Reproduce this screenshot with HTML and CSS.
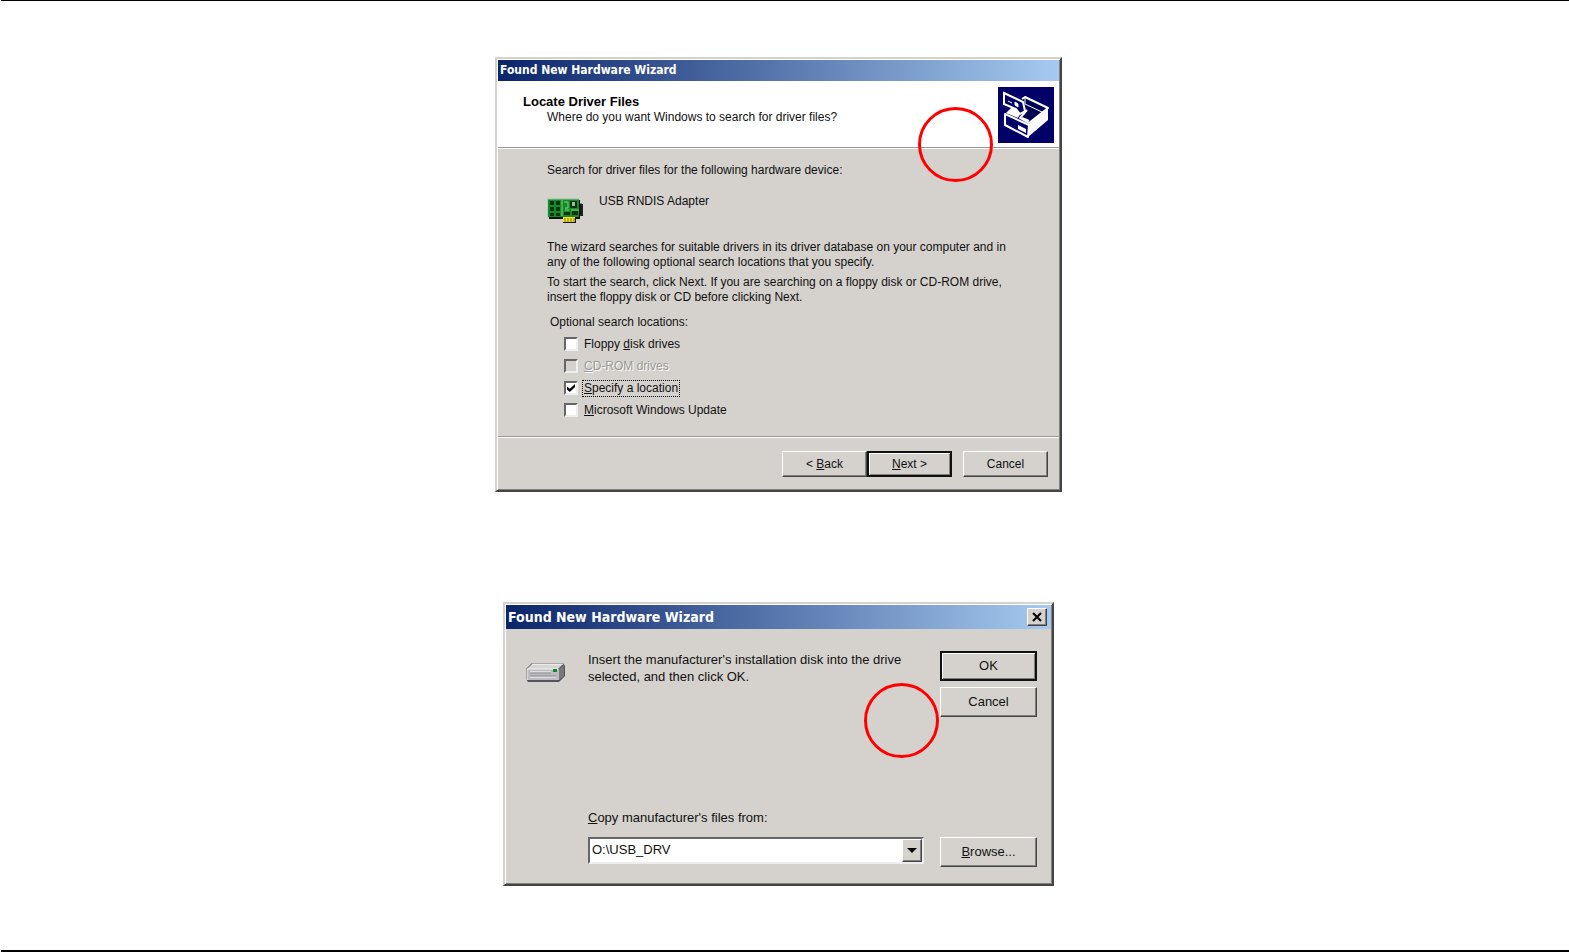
FILE: index.html
```
<!DOCTYPE html>
<html lang="en">
<head>
    <meta charset="UTF-8">
    <title>Found New Hardware Wizard</title>
    <link rel="stylesheet" href="styles.css">
</head>
<body>
<main class="page">
    <section class="dialog wizard">
        <h2 class="titleBar">Found New Hardware Wizard</h2>
        <div class="banner">
            <div class="bannerText">
                <h3>Locate Driver Files</h3>
                <p>Where do you want Windows to search for driver files?</p>
            </div>
            <svg class="bannerIcon" viewBox="0 0 56 56" aria-hidden="true">
                <rect width="56" height="56" fill="#000066"/>
                <path d="M7 27L15 20L26 10L50 21V33L30 50L7 38Z" fill="#000066"/>
                <path d="M24 12L27 10L50 21L31 36L22 31L29 23" fill="#000052" stroke="#fff" stroke-width="2" stroke-linejoin="round"/>
                <path d="M27 10V17L44 25" fill="none" stroke="#fff"/>
                <path d="M31 37L50 21V33L30 50Z" fill="#fff"/>
                <path d="M24 31L31 34" stroke="#fff" stroke-width="2"/>
                <path d="M7 27L31 38L30 50L7 38Z" fill="#000066" stroke="#fff" stroke-width="2" stroke-linejoin="round"/>
                <path d="M8 26L14 20L23 25L20 31Z" fill="#fff"/>
                <path d="M6 6L25 15L27 24L22 27L18 22L6 17Z" fill="#000066" stroke="#fff" stroke-width="2"/>
                <path d="M10 14l4 2M17 15l3 2v3l-3-2z" fill="#fff" stroke="#fff"/>
                <path d="M20 38l8 4v4l-8-4z" fill="#fff"/>
            </svg>
        </div>
        <div class="wizardBody">
            <p>Search for driver files for the following hardware device:</p>
            <div class="device">
                <svg class="cardIcon" viewBox="0 0 36 26" aria-hidden="true">
                    <path d="M2 2H33V6H36V18H33V21H29V25H16V21H2Z" fill="#111"/>
                    <rect x="1" y="1" width="31" height="18" fill="#158a2d"/>
                    <path d="M0 0V20M1 1H32" stroke="#9fc7a0" fill="none"/>
                    <path d="M3 3h4v4H3zM9 3h4v4H9zM3 9h4v4H3zM9 9h4v4H9zM3 15h4v3H3zM9 15h4v3H9zM23 3h7v7h-7zM17 14h6v3h-6zM25 13h6v4h-6z" fill="#073611"/>
                    <path d="M15 2v16M17 4h4v6h-3M24 12h8M18 12h4" stroke="#75d86e" fill="none"/>
                    <rect x="25" y="4" width="3" height="4" fill="#a7b5a3"/>
                    <rect x="16" y="19" width="12" height="5" fill="#f3df2b"/>
                    <path d="M18 20v4M21 20v4M24 20v4M27 20v4" stroke="#8c7b10"/>
                    <path d="M33 6h2v11h-2" fill="none" stroke="#333"/>
                </svg>
                <span>USB RNDIS Adapter</span>
            </div>
            <p>The wizard searches for suitable drivers in its driver database on your computer and in<br>any of the following optional search locations that you specify.</p>
            <p class="hint">To start the search, click Next. If you are searching on a floppy disk or CD-ROM drive,<br>insert the floppy disk or CD before clicking Next.</p>
            <fieldset class="locations">
                <legend>Optional search locations:</legend>
                <label class="check"><input type="checkbox"><span>Floppy <u>d</u>isk drives</span></label>
                <label class="check disabled"><input type="checkbox" disabled><span><u>C</u>D-ROM drives</span></label>
                <label class="check focused"><input type="checkbox" checked><span><u>S</u>pecify a location</span></label>
                <label class="check"><input type="checkbox"><span><u>M</u>icrosoft Windows Update</span></label>
            </fieldset>
        </div>
        <div class="wizardButtons">
            <button type="button" class="btn">&lt; <u>B</u>ack</button>
            <button type="button" class="btn default"><u>N</u>ext &gt;</button>
            <button type="button" class="btn cancel">Cancel</button>
        </div>
        <span class="ring"></span>
    </section>

    <section class="dialog disk">
        <div class="titleBar">
            <h2>Found New Hardware Wizard</h2>
            <button type="button" class="close" aria-label="Close">
                <svg viewBox="0 0 12 10" aria-hidden="true"><path d="M2 1L10 9M10 1L2 9" stroke="#000" stroke-width="2"/></svg>
            </button>
        </div>
        <div class="diskBody">
            <svg class="driveIcon" viewBox="0 0 39 20" aria-hidden="true">
                <path d="M6 0H37L39 3V13L33 19H2L0 16V6Z" fill="#555"/>
                <path d="M6 1H37L32 6H1Z" fill="#d5d5d8"/>
                <path d="M6 1H37" stroke="#fff"/>
                <path d="M33 6L38 2V13L33 17Z" fill="#77777c"/>
                <rect x="1" y="6" width="32" height="11" fill="#bdbdc1"/>
                <path d="M1 17V6H32" fill="none" stroke="#f5f5f5"/>
                <path d="M4 9H25M4 14H30" stroke="#fff"/>
                <path d="M4 10H25M4 13H30" stroke="#85858a"/>
                <rect x="27" y="6" width="4" height="3" fill="#0c8a20"/>
            </svg>
            <p>Insert the manufacturer's installation disk into the drive<br>selected, and then click OK.</p>
            <div class="diskButtons">
                <button type="button" class="btn default">OK</button>
                <button type="button" class="btn">Cancel</button>
            </div>
        </div>
        <div class="source">
            <div class="field">
                <label for="source"><u>C</u>opy manufacturer's files from:</label>
                <div class="combo">
                    <select id="source">
                        <option>O:\USB_DRV</option>
                    </select>
                    <span class="arrow"></span>
                </div>
            </div>
            <button type="button" class="btn"><u>B</u>rowse...</button>
        </div>
        <span class="ring"></span>
    </section>
</main>
</body>
</html>
```
FILE: styles.css
```
* {
    box-sizing: border-box;
    margin: 0;
    padding: 0;
}

body {
    padding-left: 1px;
    background: #fff;
    color: #111;
    font-family: "Liberation Sans", Arial, sans-serif;
    font-size: 12px;
    line-height: 15px;
}

button, select {
    color: inherit;
    font: inherit;
}

u {
    text-underline-offset: 1px;
}

.page {
    display: flex;
    flex-direction: column;
    align-items: center;
    gap: 110px;
    min-height: 100vh;
    padding: 56px 13px 64px 0;
    border-top: 1px solid #000;
    border-bottom: 2px solid #000;
}

/* window frame */
.dialog {
    position: relative;
    width: 100%;
    padding: 1px;
    background: #d5d2cd;
    border: 2px solid;
    border-color: #d5d2cd #444 #444 #d5d2cd;
    box-shadow: inset 1px 1px #fff, inset -1px -1px #808080;
}

.titleBar {
    display: flex;
    align-items: center;
    justify-content: space-between;
    height: 21px;
    padding: 0 2px;
    background: linear-gradient(to right, #0a246a, #a6caf0);
    color: #fff;
    font-family: "DejaVu Sans Condensed", "DejaVu Sans", sans-serif;
    font-size: 12px;
    font-weight: bold;
}

.titleBar h2 {
    font-size: inherit;
}

.ring {
    position: absolute;
    width: 75px;
    height: 75px;
    border: 3px solid #f00;
    border-radius: 50%;
}

.btn {
    height: 26px;
    background: #d5d2cd;
    border: 1px solid;
    border-color: #fff #444 #444 #fff;
    box-shadow: inset -1px -1px #808080;
}

.btn.default {
    border: 2px solid #111;
    box-shadow: inset 1px 1px #fff, inset -1px -1px #808080;
}

/* driver search window */
.wizard {
    max-width: 567px;
}

.wizard .ring {
    top: 48px;
    right: 67px;
}

.banner {
    display: flex;
    justify-content: space-between;
    height: 67px;
    padding: 6px 5px 0 25px;
    background: #fff;
    border-bottom: 1px solid #999;
}

.bannerText {
    padding-top: 6px;
}

.bannerText h3 {
    font-size: 13px;
    line-height: 17px;
    color: #000;
}

.bannerText p {
    padding-left: 24px;
}

.bannerIcon {
    width: 56px;
    height: 56px;
}

.wizardBody {
    padding: 14px 50px 15px 49px;
    border-top: 1px solid #fff;
}

.device {
    display: flex;
    gap: 16px;
    margin: 16px 0;
}

.cardIcon {
    width: 36px;
    height: 26px;
    margin-top: 4px;
}

.hint {
    margin-top: 5px;
}

.locations {
    padding: 10px 0 0 3px;
    border: 0;
}

.locations legend {
    float: left;
    width: 100%;
    margin-bottom: 3px;
}

.check {
    display: flex;
    align-items: center;
    clear: both;
    gap: 4px;
    height: 22px;
    padding-left: 14px;
}

.check input {
    display: grid;
    place-items: center;
    width: 14px;
    height: 14px;
    appearance: none;
    background: #fff;
    border: 2px solid;
    border-color: #666 #eee #eee #666;
}

.check input:disabled {
    background: #d5d2cd;
}

.check input:checked::before {
    content: "";
    width: 8px;
    height: 8px;
    background: #000;
    clip-path: polygon(0 30%, 35% 60%, 100% 0, 100% 38%, 35% 100%, 0 68%);
}

.check span {
    padding: 0 1px;
    border: 1px solid transparent;
}

.disabled {
    color: #999;
    text-shadow: 1px 1px #fff;
}

.focused span {
    border: 1px dotted #000;
}

.wizardButtons {
    display: flex;
    justify-content: flex-end;
    padding: 14px 11px 12px;
    border-top: 1px solid #999;
    box-shadow: inset 0 1px #fff;
}

.wizardButtons .btn {
    width: 85px;
}

.wizardButtons .cancel {
    margin-left: 11px;
}

/* insert disk window */
.disk {
    max-width: 551px;
    font-size: 13px;
    line-height: 17px;
}

.disk .ring {
    top: 79px;
    right: 113px;
}

.disk .titleBar {
    height: 24px;
    padding-right: 4px;
    font-size: 14px;
}

.close {
    display: grid;
    place-items: center;
    width: 20px;
    height: 18px;
    background: #d5d2cd;
    border: 1px solid;
    border-color: #fff #444 #444 #fff;
    box-shadow: inset -1px -1px #808080;
}

.close svg {
    width: 12px;
    height: 10px;
}

.diskBody {
    display: flex;
    align-items: flex-start;
    padding: 22px 14px 0 20px;
}

.driveIcon {
    width: 39px;
    height: 20px;
    margin: 12px 23px 0 0;
}

.diskButtons {
    display: grid;
    gap: 6px;
    margin-left: auto;
}

.disk .btn {
    width: 97px;
    height: 30px;
    padding-bottom: 2px;
}

.source {
    display: flex;
    align-items: flex-end;
    gap: 16px;
    padding: 92px 14px 16px 82px;
}

.field {
    flex: 1;
}

.combo {
    display: flex;
    height: 27px;
    margin: 11px 0 3px;
    background: #fff;
    border: 2px solid;
    border-color: #666 #eee #eee #666;
}

.combo select {
    flex: 1;
    padding: 0 0 2px 2px;
    appearance: none;
    background: #fff;
    border: 0;
}

.arrow {
    display: grid;
    place-items: center;
    width: 20px;
    background: #d5d2cd;
    border: 1px solid;
    border-color: #fff #444 #444 #fff;
    box-shadow: inset -1px -1px #808080;
}

.arrow::before {
    content: "";
    border: 5px solid transparent;
    border-top-color: #000;
    border-bottom: 0;
}
```
